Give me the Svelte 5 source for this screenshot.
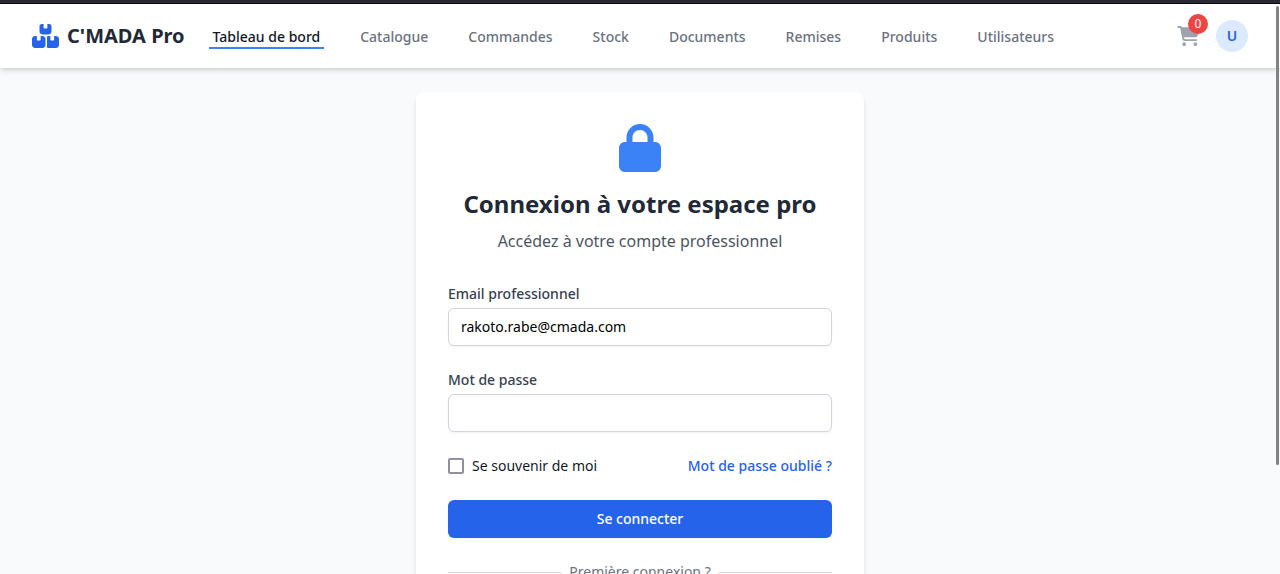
<script>
  const links = [
    'Tableau de bord',
    'Catalogue',
    'Commandes',
    'Stock',
    'Documents',
    'Remises',
    'Produits',
    'Utilisateurs'
  ];
  let current = $state('Tableau de bord');
  let email = $state('rakoto.rabe@cmada.com');
  let password = $state('');
  let remember = $state(false);
</script>

<div class="page">
  <div class="strip"></div>
  <header class="bar">
    <a class="brand" href="#accueil">
      <svg class="brand-icon" viewBox="0 0 576 512" aria-hidden="true">
        <path d="M248 0L208 0c-26.5 0-48 21.5-48 48l0 112c0 35.3 28.7 64 64 64l128 0c35.3 0 64-28.7 64-64l0-112c0-26.5-21.5-48-48-48L328 0l0 80c0 8.800-7.200 16-16 16l-48 0c-8.800 0-16-7.200-16-16l0-80zM64 256c-35.300 0-64 28.700-64 64L0 448c0 35.300 28.700 64 64 64l160 0c35.300 0 64-28.700 64-64l0-128c0-35.300-28.700-64-64-64l-40 0 0 80c0 8.800-7.200 16-16 16l-48 0c-8.800 0-16-7.200-16-16l0-80-40 0zM352 512l160 0c35.300 0 64-28.700 64-64l0-128c0-35.300-28.700-64-64-64l-40 0 0 80c0 8.800-7.200 16-16 16l-48 0c-8.800 0-16-7.200-16-16l0-80-40 0c-15 0-28.800 5.100-39.700 13.800c4.900 10.400 7.700 22 7.700 34.200l0 160c0 12.200-2.800 23.800-7.700 34.200C323.200 506.900 337 512 352 512z" />
      </svg>
      <span>C'MADA Pro</span>
    </a>
    <nav class="links">
      {#each links as link}
        <a href="#menu" class:active={link === current} onclick={() => (current = link)}>{link}</a>
      {/each}
    </nav>
    <div class="tools">
      <button class="cart" type="button" aria-label="Panier">
        <svg viewBox="0 0 576 512" aria-hidden="true">
          <path d="M0 24C0 10.700 10.700 0 24 0L69.500 0c22 0 41.500 12.800 50.600 32l411 0c26.300 0 45.500 25 38.600 50.400l-41 152.300c-8.500 31.400-37 53.300-69.500 53.300l-288.500 0 5.400 28.500c2.200 11.300 12.100 19.500 23.600 19.500L488 336c13.300 0 24 10.700 24 24s-10.700 24-24 24l-288.300 0c-34.600 0-64.300-24.600-70.700-58.500L77.400 54.500c-.7-3.800-4-6.500-7.900-6.500L24 48C10.700 48 0 37.300 0 24zM128 464a48 48 0 1 1 96 0 48 48 0 1 1 -96 0zm336-48a48 48 0 1 1 0 96 48 48 0 1 1 0-96z" />
        </svg>
        <span class="count">0</span>
      </button>
      <button class="avatar" type="button">U</button>
    </div>
  </header>

  <main>
    <section class="card">
      <div class="intro">
        <svg class="lock" viewBox="0 0 448 512" aria-hidden="true">
          <path d="M144 144l0 48 160 0 0-48c0-44.200-35.800-80-80-80s-80 35.800-80 80zM80 192l0-48C80 64.500 144.500 0 224 0s144 64.500 144 144l0 48 16 0c35.300 0 64 28.700 64 64l0 192c0 35.300-28.700 64-64 64L64 512c-35.300 0-64-28.700-64-64L0 256c0-35.300 28.700-64 64-64l16 0z" />
        </svg>
        <h1>Connexion à votre espace pro</h1>
        <p>Accédez à votre compte professionnel</p>
      </div>

      <form onsubmit={(e) => e.preventDefault()}>
        <div class="field">
          <label for="email">Email professionnel</label>
          <input id="email" type="email" bind:value={email} />
        </div>
        <div class="field">
          <label for="password">Mot de passe</label>
          <input id="password" type="password" bind:value={password} />
        </div>
        <div class="options">
          <label class="remember">
            <input type="checkbox" bind:checked={remember} />
            <span>Se souvenir de moi</span>
          </label>
          <a href="#oubli">Mot de passe oublié ?</a>
        </div>
        <button class="submit" type="submit">Se connecter</button>
        <div class="divider"><span>Première connexion ?</span></div>
      </form>
    </section>
  </main>
  <div class="thumb"></div>
</div>

<style>
  :global(html) {
    scrollbar-width: none;
  }
  :global(body) {
    margin: 0;
    background: #f9fafb;
  }
  .page,
  .page * {
    box-sizing: border-box;
  }
  .page {
    min-height: 100vh;
    font-family: 'Noto Sans', sans-serif;
    font-size: 14px;
    line-height: 20px;
    color: #111827;
  }
  button,
  input {
    font: inherit;
  }
  button {
    border: 0;
    padding: 0;
    cursor: pointer;
  }
  a {
    text-decoration: none;
  }
  svg {
    display: block;
    fill: currentColor;
  }
  .strip {
    height: 4px;
    background: #2b2a33;
    border-bottom: 1px solid #0c0c0d;
  }
  .bar {
    display: flex;
    align-items: center;
    height: 64px;
    padding: 0 32px;
    background: #fff;
    box-shadow: 0 4px 6px -1px rgb(0 0 0 / 0.1), 0 2px 4px -1px rgb(0 0 0 / 0.1);
  }
  .brand {
    display: flex;
    align-items: center;
    gap: 8px;
    color: #1f2937;
    font-size: 20px;
    line-height: 30px;
    font-weight: 700;
    white-space: nowrap;
  }
  .brand-icon {
    width: 27px;
    height: 24px;
    color: #2563eb;
  }
  .links {
    display: flex;
    gap: 32px;
    margin-left: 24px;
  }
  .links a {
    padding: 4px 4px 0;
    border-bottom: 2px solid transparent;
    font-weight: 500;
    color: #6b7280;
    white-space: nowrap;
  }
  .links a.active {
    color: #111827;
    border-color: #3b82f6;
  }
  .tools {
    display: flex;
    align-items: center;
    gap: 16px;
    margin-left: auto;
  }
  .cart {
    position: relative;
    background: none;
    color: #9ca3af;
  }
  .cart svg {
    width: 23px;
    height: 20px;
  }
  .count {
    position: absolute;
    top: -12px;
    right: -8px;
    width: 20px;
    height: 20px;
    border-radius: 50%;
    background: #ef4444;
    color: #fff;
    font-size: 12px;
    line-height: 20px;
    text-align: center;
  }
  .avatar {
    width: 32px;
    height: 32px;
    border-radius: 50%;
    background: #dbeafe;
    color: #2563eb;
    font-weight: 600;
  }
  main {
    padding: 24px 16px;
  }
  .card {
    max-width: 448px;
    margin: 0 auto;
    padding: 32px;
    background: #fff;
    border-radius: 8px;
    box-shadow: 0 4px 6px -1px rgb(0 0 0 / 0.1), 0 2px 4px -2px rgb(0 0 0 / 0.1);
  }
  .intro {
    display: flex;
    flex-direction: column;
    align-items: center;
    margin-bottom: 30px;
    text-align: center;
  }
  .lock {
    width: 42px;
    height: 48px;
    color: #3b82f6;
  }
  h1 {
    margin: 16px 0 8px;
    font-size: 24px;
    line-height: 32px;
    font-weight: 700;
    color: #1f2937;
  }
  p {
    margin: 0;
    font-size: 16px;
    line-height: 26px;
    color: #4b5563;
  }
  form {
    display: flex;
    flex-direction: column;
    gap: 24px;
  }
  .field {
    display: flex;
    flex-direction: column;
    gap: 4px;
  }
  .field label {
    font-weight: 500;
    color: #374151;
  }
  .field input {
    width: 100%;
    height: 38px;
    padding: 7px 12px 9px;
    border: 1px solid #d1d5db;
    border-radius: 6px;
    background: #fff;
    color: #000;
    box-shadow: 0 1px 2px rgb(0 0 0 / 0.05);
  }
  .options {
    display: flex;
    align-items: center;
    justify-content: space-between;
  }
  .remember {
    display: flex;
    align-items: center;
    gap: 8px;
  }
  .remember input {
    appearance: none;
    width: 16px;
    height: 16px;
    margin: 0;
    border: 2px solid #8f8f9d;
    border-radius: 2px;
    background: #fff;
  }
  .remember input:checked {
    background: #2563eb;
    border-color: #2563eb;
  }
  .options a {
    font-weight: 500;
    color: #2563eb;
  }
  .submit {
    height: 38px;
    border-radius: 6px;
    background: #2563eb;
    color: #fff;
    font-weight: 500;
    box-shadow: 0 1px 2px rgb(0 0 0 / 0.05);
  }
  .divider {
    display: flex;
    align-items: center;
    gap: 8px;
    color: #6b7280;
  }
  .divider::before,
  .divider::after {
    content: '';
    flex: 1;
    height: 1px;
    background: #d1d5db;
  }
  .thumb {
    position: fixed;
    top: 6px;
    right: 1px;
    width: 3px;
    height: 80vh;
    border-radius: 2px;
    background: #7f8483;
  }
</style>
